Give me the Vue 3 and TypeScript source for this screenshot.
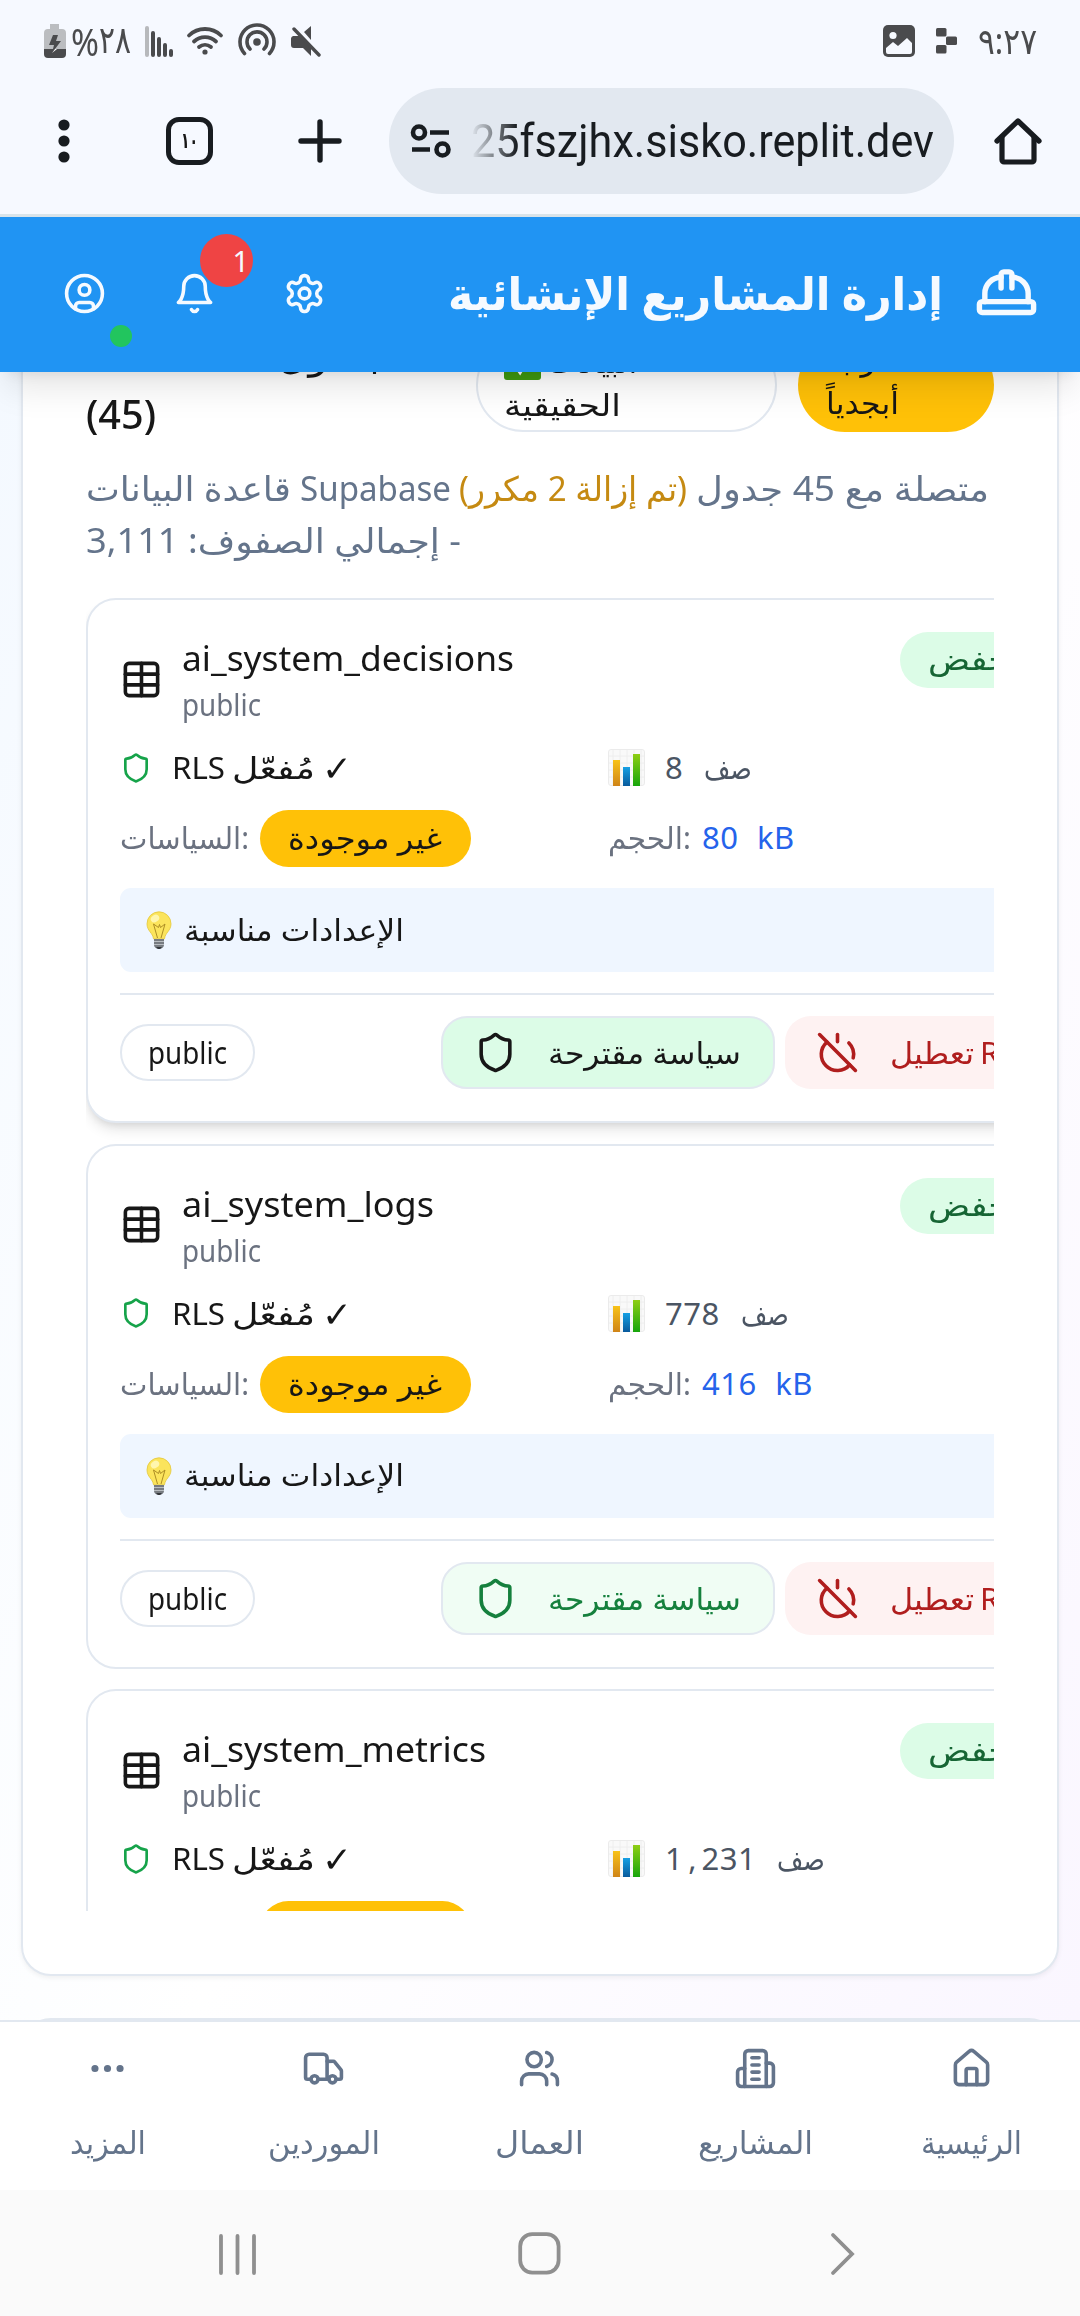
<script setup lang="ts">
import type { Directive } from 'vue'

interface TableInfo {
  name: string
  rows: string
  size: string
  active: boolean
}

const tables: TableInfo[] = [
  { name: 'ai_system_decisions', rows: '8', size: '80 kB', active: true },
  { name: 'ai_system_logs', rows: '778', size: '416 kB', active: false },
  { name: 'ai_system_metrics', rows: '1,231', size: '1144 kB', active: false },
]

const nameWidths: Record<string, number> = {
  ai_system_decisions: 332,
  ai_system_logs: 252,
  ai_system_metrics: 304,
}

const circle = (cx: number, cy: number, r: number): string =>
  `M${cx - r} ${cy}a${r} ${r} 0 1 0 ${2 * r} 0a${r} ${r} 0 1 0 ${-2 * r} 0`

const icons: Record<string, string[]> = {
  user: [circle(12, 12, 10), circle(12, 10, 3), 'M7 20.662V19a2 2 0 0 1 2-2h6a2 2 0 0 1 2 2v1.662'],
  bell: ['M6 8a6 6 0 0 1 12 0c0 7 3 9 3 9H3s3-2 3-9', 'M10.3 21a1.94 1.94 0 0 0 3.4 0'],
  gear: [
    'M12.22 2h-.44a2 2 0 0 0-2 2v.18a2 2 0 0 1-1 1.73l-.43.25a2 2 0 0 1-2 0l-.15-.08a2 2 0 0 0-2.73.73l-.22.38a2 2 0 0 0 .73 2.73l.15.1a2 2 0 0 1 1 1.72v.51a2 2 0 0 1-1 1.74l-.15.09a2 2 0 0 0-.73 2.73l.22.38a2 2 0 0 0 2.73.73l.15-.08a2 2 0 0 1 2 0l.43.25a2 2 0 0 1 1 1.73V20a2 2 0 0 0 2 2h.44a2 2 0 0 0 2-2v-.18a2 2 0 0 1 1-1.73l.43-.25a2 2 0 0 1 2 0l.15.08a2 2 0 0 0 2.73-.73l.22-.39a2 2 0 0 0-.73-2.73l-.15-.08a2 2 0 0 1-1-1.74v-.5a2 2 0 0 1 1-1.74l.15-.09a2 2 0 0 0 .73-2.73l-.22-.38a2 2 0 0 0-2.73-.73l-.15.08a2 2 0 0 1-2 0l-.43-.25a2 2 0 0 1-1-1.73V4a2 2 0 0 0-2-2z',
    circle(12, 12, 3),
  ],
  hat: [
    'M2 18a1 1 0 0 0 1 1h18a1 1 0 0 0 1-1v-2a1 1 0 0 0-1-1H3a1 1 0 0 0-1 1v2z',
    'M10 10V5a1 1 0 0 1 1-1h2a1 1 0 0 1 1 1v5',
    'M4 15v-3a6 6 0 0 1 6-6',
    'M14 6a6 6 0 0 1 6 6v3',
  ],
  table: ['M12 3v18', 'M5 3h14a2 2 0 0 1 2 2v14a2 2 0 0 1-2 2H5a2 2 0 0 1-2-2V5a2 2 0 0 1 2-2z', 'M3 9h18', 'M3 15h18'],
  shield: [
    'M20 13c0 5-3.5 7.5-7.66 8.95a1 1 0 0 1-.67-.01C7.5 20.5 4 18 4 13V6a1 1 0 0 1 1-1c2 0 4.5-1.2 6.24-2.72a1.17 1.17 0 0 1 1.52 0C14.51 3.81 17 5 19 5a1 1 0 0 1 1 1z',
  ],
  powerOff: ['M18.36 6.64A9 9 0 0 1 20.77 15', 'M6.16 6.16a9 9 0 1 0 12.68 12.68', 'M12 2v4', 'm2 2 20 20'],
  more: [circle(12, 12, 1), circle(19, 12, 1), circle(5, 12, 1)],
  truck: [
    'M14 18V6a2 2 0 0 0-2-2H4a2 2 0 0 0-2 2v11a1 1 0 0 0 1 1h2',
    'M15 18H9',
    'M19 18h2a1 1 0 0 0 1-1v-3.65a1 1 0 0 0-.22-.624l-3.48-4.35A1 1 0 0 0 17.52 8H14',
    circle(17, 18, 2),
    circle(7, 18, 2),
  ],
  users: [
    'M16 21v-2a4 4 0 0 0-4-4H6a4 4 0 0 0-4 4v2',
    circle(9, 7, 4),
    'M22 21v-2a4 4 0 0 0-3-3.87',
    'M16 3.13a4 4 0 0 1 0 7.75',
  ],
  building: [
    'M6 22V4a2 2 0 0 1 2-2h8a2 2 0 0 1 2 2v18Z',
    'M6 12H4a2 2 0 0 0-2 2v6a2 2 0 0 0 2 2h2',
    'M18 9h2a2 2 0 0 1 2 2v9a2 2 0 0 1-2 2h-2',
    'M10 6h4',
    'M10 10h4',
    'M10 14h4',
    'M10 18h4',
  ],
  house: [
    'M15 21v-8a1 1 0 0 0-1-1h-4a1 1 0 0 0-1 1v8',
    'M3 10a2 2 0 0 1 .709-1.528l7-5.999a2 2 0 0 1 2.582 0l7 5.999A2 2 0 0 1 21 10v9a2 2 0 0 1-2 2H5a2 2 0 0 1-2-2z',
  ],
}

const navItems = [
  { label: 'المزيد', icon: 'more', width: 76 },
  { label: 'الموردين', icon: 'truck', width: 112 },
  { label: 'العمال', icon: 'users', width: 89 },
  { label: 'المشاريع', icon: 'building', width: 115 },
  { label: 'الرئيسية', icon: 'house', width: 101 },
]

// Condenses or widens a label so that it takes exactly the given width.
const vFit: Directive<HTMLElement, number> = {
  mounted(el, { value }) {
    const natural = el.getBoundingClientRect().width
    el.style.transform = `scaleX(${value / natural})`
    el.style.marginRight = `${value - natural}px`
  },
}
</script>

<template>
  <div class="phone">
    <div class="status">
      <svg class="battery" width="22" height="34" viewBox="0 0 22 34">
        <path d="M6 0h9v5h3a4 4 0 0 1 4 4v16H0V9a4 4 0 0 1 4-4h2z" fill="#bbbdc0" />
        <path d="M0 25h22v5a4 4 0 0 1-4 4H4a4 4 0 0 1-4-4z" fill="#4a4b4d" />
        <path d="M9 11h5l-2 6h5L8 29l2-8H5z" fill="#4a4b4d" />
        <path d="M11 25h2l-5 4z" fill="#fff" />
      </svg>
      <span class="percent"><span v-fit="28" class="t">%</span><span v-fit="32" class="t digits">٢٨</span></span>
      <svg class="signal" width="29" height="31" viewBox="0 0 29 31" stroke-width="4" stroke-linecap="round">
        <path d="M2 2v27" stroke="#b7b9bc" />
        <path d="M8 7v22M14 13v16M20 19v10M26 25v4" stroke="#4a4b4d" />
      </svg>
      <svg class="wifi" width="38" height="28" viewBox="0 0 38 28" fill="none" stroke="#4a4b4d" stroke-width="3.8" stroke-linecap="round">
        <path d="M3 8.500a23 23 0 0 1 32 0M8 14.500a16 16 0 0 1 22 0M13 20a9.500 9.500 0 0 1 12 0" />
        <circle cx="19" cy="25" r="2.600" fill="#4a4b4d" stroke="none" />
      </svg>
      <svg class="hotspot" width="38" height="33" viewBox="0 0 38 33" fill="none" stroke="#4a4b4d" stroke-width="3.600" stroke-linecap="round">
        <path d="M6.500 30.500a17 17 0 1 1 25 0M12 26a10 10 0 1 1 14 0" />
        <circle cx="19" cy="19" r="3.800" fill="#4a4b4d" stroke="none" />
      </svg>
      <svg class="mute" width="31" height="31" viewBox="0 0 31 31">
        <path d="M2 10h6l12 12v8l-8-8H3a3 3 0 0 1-3-3v-6a3 3 0 0 1 2-3zM20 0v14l-7-8z" fill="#4a4b4d" />
        <path d="M3 3l25 26" stroke="#4a4b4d" stroke-width="3.400" stroke-linecap="round" />
      </svg>
      <svg class="photo" width="32" height="32" viewBox="0 0 32 32">
        <rect width="32" height="32" rx="5" fill="#4a4b4d" />
        <circle cx="10" cy="10.500" r="3.600" fill="#f6f9ff" />
        <path d="M3 23l7-6 5 4 9-8 5 5v9a2 2 0 0 1-2 2H5a2 2 0 0 1-2-2z" fill="#f6f9ff" />
      </svg>
      <svg class="replit" width="21" height="26" viewBox="0 0 21 26" fill="#4a4b4d">
        <rect width="10.500" height="8.500" rx="1.500" />
        <rect x="10" y="8.500" width="11" height="8.500" rx="1.500" />
        <rect y="17" width="10.500" height="8.500" rx="1.500" />
      </svg>
      <span v-fit="59" class="t clock">٩:٢٧</span>
    </div>

    <div class="toolbar">
      <svg class="dots" width="12" height="44" viewBox="0 0 12 44" fill="#181c20">
        <circle cx="6" cy="6" r="5.600" />
        <circle cx="6" cy="22" r="5.600" />
        <circle cx="6" cy="38" r="5.600" />
      </svg>
      <div class="tabs"><span v-fit="17" class="t">١٠</span></div>
      <svg class="plus" width="44" height="44" viewBox="0 0 44 44" stroke="#181c20" stroke-width="5.400" stroke-linecap="round">
        <path d="M22 3v38M3 22h38" />
      </svg>
      <div class="address">
        <svg width="42" height="34" viewBox="0 0 42 34" fill="none" stroke="#181c20" stroke-width="4.600">
          <circle cx="9" cy="8.500" r="6" />
          <circle cx="32.500" cy="25.500" r="6" />
          <path d="M20 8.500h19M2 25.500h18" />
        </svg>
        <div class="url"><span v-fit="463" class="t">25fszjhx.sisko.replit.dev</span></div>
      </div>
      <svg class="home" width="50" height="48" viewBox="0 0 50 48" fill="none" stroke="#181c20" stroke-width="5.200" stroke-linecap="round" stroke-linejoin="round">
        <path d="M4 24L25 4l21 20" />
        <path d="M9 20v23a2 2 0 0 0 2 2h28a2 2 0 0 0 2-2V20" />
      </svg>
    </div>

    <header class="appbar">
      <div class="action">
        <svg class="icon" viewBox="0 0 24 24"><path v-for="d in icons.user" :key="d" :d="d" /></svg>
        <i class="online"></i>
      </div>
      <div class="action">
        <svg class="icon" viewBox="0 0 24 24"><path v-for="d in icons.bell" :key="d" :d="d" /></svg>
        <span class="count">1</span>
      </div>
      <div class="action">
        <svg class="icon" viewBox="0 0 24 24"><path v-for="d in icons.gear" :key="d" :d="d" /></svg>
      </div>
      <h1><span v-fit="495" class="t">إدارة المشاريع الإنشائية</span></h1>
      <svg class="icon hat" viewBox="0 0 24 24"><path v-for="d in icons.hat" :key="d" :d="d" /></svg>
    </header>

    <main class="content">
      <section class="panel">
        <div class="heading">
          <div class="title">
            <div class="first"><span v-fit="110" class="t">جداول</span></div>
            <div><span v-fit="70" class="t">(45)</span></div>
          </div>
          <div class="chip outline">
            <div class="chip-line">
              <svg width="37" height="37" viewBox="0 0 37 37">
                <rect width="37" height="37" rx="3" fill="#3f9a10" />
                <path d="M9 18l7 10L28 8" stroke="#fff" stroke-width="5" fill="none" />
              </svg>
              <span v-fit="90" class="t">البيانات</span>
            </div>
            <div class="chip-line"><span v-fit="117" class="t">الحقيقية</span></div>
          </div>
          <div class="chip amber">
            <div class="chip-line"><span v-fit="68" class="t">مرتبة</span></div>
            <div class="chip-line"><span v-fit="73" class="t">أبجدياً</span></div>
          </div>
        </div>

        <div class="desc">
          <div class="desc-line">
            <span v-fit="205" class="t">قاعدة البيانات</span>
            <span v-fit="151" class="t">Supabase</span>
            <span v-fit="228" class="t gold" dir="rtl">(تم إزالة 2 مكرر)</span>
            <span v-fit="293" class="t" dir="rtl">متصلة مع 45 جدول</span>
          </div>
          <div class="desc-line"><span v-fit="375" class="t" dir="rtl">- إجمالي الصفوف: 3,111</span></div>
        </div>

        <div class="list">
          <article v-for="table in tables" :key="table.name" class="card" :class="{ active: table.active }">
            <div class="card-head">
              <svg class="icon" viewBox="0 0 24 24"><path v-for="d in icons.table" :key="d" :d="d" /></svg>
              <div class="names">
                <div class="name"><span v-fit="nameWidths[table.name]" class="t">{{ table.name }}</span></div>
                <div class="schema"><span v-fit="79" class="t">public</span></div>
              </div>
              <div class="risk"><span v-fit="112" class="t">منخفض</span></div>
            </div>

            <div class="row rls">
              <div class="cell">
                <svg class="icon small" viewBox="0 0 24 24"><path v-for="d in icons.shield" :key="d" :d="d" /></svg>
                <span v-fit="53" class="t latin">RLS</span>
                <span v-fit="83" class="t">مُفعّل</span>
                <span v-fit="30" class="t check">✓</span>
              </div>
              <div class="cell mono gray">
                <svg class="chart" width="37" height="37" viewBox="0 0 37 37">
                  <defs>
                    <linearGradient id="cy" x1="0" y1="0" x2="0" y2="1"><stop offset="0" stop-color="#f8c217" /><stop offset="1" stop-color="#cf8418" /></linearGradient>
                    <linearGradient id="cb" x1="0" y1="0" x2="0" y2="1"><stop offset="0" stop-color="#16a0e4" /><stop offset="1" stop-color="#095a9c" /></linearGradient>
                    <linearGradient id="cg" x1="0" y1="0" x2="0" y2="1"><stop offset="0" stop-color="#8fce14" /><stop offset="1" stop-color="#17a50c" /></linearGradient>
                  </defs>
                  <rect x=".5" y=".5" width="36" height="36" rx="2.500" fill="#f9f9f9" stroke="#ebebeb" />
                  <path d="M5 1v35M12 1v35M19 1v35M26 1v35M33 1v35M1 7h35M1 14h35M1 21h35M1 28h35" stroke="#ececec" stroke-width=".8" />
                  <rect x="5" y="11" width="7" height="26" fill="url(#cy)" />
                  <rect x="15" y="18" width="7" height="19" fill="url(#cb)" />
                  <rect x="25" y="5" width="7" height="32" fill="url(#cg)" />
                </svg>
                <span class="t"><template v-for="(part, i) in table.rows.split(',')" :key="i"><span v-if="i > 0" class="comma">,</span>{{ part }}</template></span>
                <span v-fit="48" class="t unit">صف</span>
              </div>
            </div>

            <div class="row policy">
              <div class="cell">
                <span v-fit="129" class="t muted">السياسات&lrm;:</span>
                <span class="tag amber"><span v-fit="154" class="t">غير موجودة</span></span>
              </div>
              <div class="cell">
                <span v-fit="83" class="t muted">الحجم&lrm;:</span>
                <span class="t mono blue">{{ table.size }}</span>
              </div>
            </div>

            <div class="note">
              <svg width="26" height="38" viewBox="0 0 26 38">
                <path d="M13 .8a12 12 0 0 1 12 12c0 7-6 9-6.500 15h-11C7 22 1 20 1 12.800a12 12 0 0 1 12-12z" fill="#fbe45c" stroke="#e3c738" stroke-width=".8" />
                <ellipse cx="9" cy="7.500" rx="4.500" ry="3.500" fill="#fff6ae" transform="rotate(-35 9 7.500)" />
                <path d="M11.500 27l-4-14 5 3.500 1-3 1 3 4.500-3.500-4 14" fill="none" stroke="#ad8e25" stroke-width="1" />
                <path d="M8 28h10v6a5 4 0 0 1-10 0z" fill="#777b80" />
                <path d="M8 30.500h10M8 33.500h10" stroke="#b9bdc1" stroke-width="1" />
                <path d="M10 36h6l-2 2h-2z" fill="#33363a" />
              </svg>
              <span v-fit="220" class="t">الإعدادات مناسبة</span>
            </div>

            <div class="actions">
              <span class="tag bordered"><span v-fit="79" class="t">public</span></span>
              <div class="btn suggest">
                <svg class="icon" viewBox="0 0 24 24"><path v-for="d in icons.shield" :key="d" :d="d" /></svg>
                <span v-fit="193" class="t">سياسة مقترحة</span>
              </div>
              <div class="btn disable">
                <svg class="icon" viewBox="0 0 24 24"><path v-for="d in icons.powerOff" :key="d" :d="d" /></svg>
                <span v-fit="84" class="t">تعطيل</span>
                <span v-fit="53" class="t rls-word">RLS</span>
              </div>
            </div>
          </article>
        </div>
      </section>
      <section class="next-panel"></section>
    </main>

    <nav class="tabbar">
      <div v-for="item in navItems" :key="item.label" class="tab">
        <svg class="icon" viewBox="0 0 24 24"><path v-for="d in icons[item.icon]" :key="d" :d="d" /></svg>
        <div class="tab-label"><span v-fit="item.width" class="t">{{ item.label }}</span></div>
      </div>
    </nav>

    <div class="system">
      <svg class="recents" width="38" height="42" viewBox="0 0 38 42"><path d="M3 3v37M19.500 3v37M36 3v37" /></svg>
      <svg class="homekey" width="43" height="43" viewBox="0 0 43 43"><rect x="2.200" y="2.200" width="38.400" height="38.400" rx="12" /></svg>
      <svg class="back" width="26" height="44" viewBox="0 0 26 44"><path d="M3 3l19 19L3 41" /></svg>
    </div>
  </div>
</template>

<style>
body {
  margin: 0;
}
</style>

<style scoped>
* {
  box-sizing: border-box;
}
.phone {
  width: 1080px;
  height: 2316px;
  display: flex;
  flex-direction: column;
  overflow: hidden;
  background: #f6f9ff;
  color: #171717;
  font-family: 'Noto Sans', 'DejaVu Sans', sans-serif;
  font-size: 30px;
  line-height: 43px;
}
svg {
  display: block;
  flex: none;
}
.t {
  display: inline-block;
  flex: none;
  white-space: nowrap;
  transform-origin: left center;
}
.icon {
  width: 43px;
  height: 43px;
  fill: none;
  stroke: currentColor;
  stroke-width: 2;
  stroke-linecap: round;
  stroke-linejoin: round;
}

/* system status */
.status {
  height: 82px;
  flex: none;
  display: flex;
  align-items: center;
  padding: 0 43px 0 44px;
  color: #4a4b4d;
}
.percent {
  display: flex;
  margin: 1px 14px 0 5px;
  font-size: 38px;
}
.digits {
  margin-top: -3px;
}
.wifi {
  margin: 0 14px 0 12px;
}
.hotspot {
  margin: -4px 15px 0 0;
}
.photo {
  margin-left: auto;
}
.replit {
  margin: 0 21px 0 21px;
}
.clock {
  margin-top: -2px;
  font-size: 36px;
}

/* browser toolbar */
.toolbar {
  height: 135px;
  flex: none;
  display: flex;
  align-items: center;
  padding: 0 37px 14px 58px;
  border-bottom: 3px solid #d9e4ea;
}
.tabs {
  width: 47px;
  height: 48px;
  margin: 0 85px 0 96px;
  border: 5px solid #181c20;
  border-radius: 13px;
  display: flex;
  justify-content: center;
  font-size: 22px;
  font-weight: bold;
  line-height: 35px;
}
.address {
  width: 565px;
  height: 106px;
  margin: 0 39px 0 47px;
  padding: 0 20px 0 21px;
  border-radius: 53px;
  background: #e2e8f0;
  display: flex;
  align-items: center;
  color: #181c20;
}
.url {
  width: 464px;
  margin-left: 19px;
  font: 46px/62px Roboto, sans-serif;
  -webkit-mask-image: linear-gradient(to right, transparent, #000 46px);
  mask-image: linear-gradient(to right, transparent, #000 46px);
}

/* app header */
.appbar {
  position: relative;
  z-index: 2;
  height: 155px;
  flex: none;
  display: flex;
  align-items: center;
  padding: 0 41px 3px 63px;
  background: #2094f3;
  color: #f5faff;
  box-shadow: 0 22px 32px -6px rgba(0, 0, 0, 0.1), 0 9px 13px -9px rgba(0, 0, 0, 0.1);
}
.action {
  position: relative;
  margin-right: 67px;
}
.online {
  position: absolute;
  left: 47px;
  top: 53px;
  width: 22px;
  height: 22px;
  border-radius: 50%;
  background: #22c55e;
}
.count {
  position: absolute;
  left: 27px;
  top: -38px;
  width: 53px;
  height: 53px;
  padding-right: 4px;
  border-radius: 50%;
  background: #ef4444;
  font-size: 29px;
  line-height: 53px;
  text-align: right;
}
h1 {
  margin: 0 31px 0 auto;
  font-size: 45px;
  line-height: 64px;
  font-weight: bold;
}
.hat {
  width: 65px;
  height: 65px;
}

/* scrolled page */
.content {
  height: 1648px;
  flex: none;
  overflow: hidden;
  background: linear-gradient(115deg, #f4f9ff 0%, #fff 52%, #faf6ff 100%);
}
.panel {
  height: 1664px;
  margin: -60px 21px 0;
  padding: 24px 63px 0;
  border: 2px solid #e2e8f0;
  border-radius: 30px;
  background: #fff;
  box-shadow: 0 2px 5px rgba(0, 0, 0, 0.06);
}
.next-panel {
  height: 100px;
  margin: 42px 21px 0;
  border: 2px solid #e2e8f0;
  border-radius: 30px;
  background: #e2e8f0;
}
.heading {
  height: 94px;
  display: flex;
}
.title {
  width: 390px;
  margin-top: -16px;
  font-size: 40px;
  font-weight: 500;
  line-height: 61px;
}
.first {
  padding-left: 192px;
}
.chip {
  padding: 0 0 0 28px;
  border-radius: 47px;
}
.chip-line {
  display: flex;
  align-items: center;
  gap: 6px;
}
.outline {
  width: 301px;
  margin-right: 21px;
  border: 2px solid #e2e8f0;
  padding: 0 0 0 26px;
}
.outline .chip-line {
  height: 43px;
}
.chip.amber {
  width: 196px;
}
.amber {
  background: #ffc107;
}
.desc {
  margin-top: 30px;
  color: #64748b;
  font-size: 34px;
  line-height: 52px;
}
.desc-line {
  display: flex;
  gap: 8.500px;
}
.gold {
  color: #c58a12;
}

/* tables */
.list {
  height: 1313px;
  margin-top: 32px;
  overflow: hidden;
}
.card {
  width: 1016px;
  height: 525px;
  margin-bottom: 20.500px;
  padding: 32px;
  border: 2px solid #e2e8f0;
  border-radius: 30px;
  background: #fff;
}
.card.active {
  box-shadow: 0 9px 13px -2px rgba(0, 0, 0, 0.1), 0 4px 9px -4px rgba(0, 0, 0, 0.12);
}
.card-head {
  height: 94px;
  display: flex;
  align-items: center;
}
.names {
  flex: none;
  width: 718px;
  margin-left: 19px;
}
.name {
  height: 51px;
  padding-top: 1px;
  font-size: 35px;
  line-height: 50px;
}
.schema,
.muted {
  color: #6b7280;
}
.schema {
  height: 43px;
}
.risk {
  align-self: flex-start;
  height: 56px;
  padding: 5px 28px;
  border-radius: 28px;
  background: #dcfce7;
  color: #166534;
}
.row {
  display: grid;
  grid-template-columns: 488px 1fr;
}
.rls {
  height: 43px;
  margin-top: 20px;
}
.cell {
  display: flex;
  align-items: center;
}
.small {
  width: 32px;
  height: 32px;
  color: #16a34a;
}
.latin {
  margin-left: 20px;
}
.latin + .t {
  margin-left: 7px;
}
.check {
  margin-left: 7px;
  font-size: 36px;
  font-weight: bold;
}
.mono {
  letter-spacing: 0.500px;
  word-spacing: 10px;
  font-size: 31px;
}
.comma {
  display: inline-block;
  width: 18.200px;
  padding-left: 5px;
}
.chart {
  margin-right: 20px;
}
.gray {
  color: #4b5563;
}
.unit {
  margin-left: 21px;
  letter-spacing: 0;
}
.blue {
  margin-left: 11px;
  color: #2563eb;
}
.policy {
  height: 57px;
  margin: 21px 0;
}
.policy .cell > .t {
  margin-top: -2px;
}
.tag {
  height: 57px;
  padding: 6px 28px;
  border-radius: 29px;
  display: flex;
}
.cell .tag {
  width: 211px;
  margin-left: 11px;
}
.note {
  height: 84px;
  padding-left: 26px;
  border-radius: 11px;
  background: #eff6ff;
  display: flex;
  align-items: center;
  gap: 12px;
}
.note .t {
  margin-top: -2px;
}
.actions {
  margin-top: 21px;
  padding-top: 21px;
  border-top: 2px solid #e2e8f0;
  display: flex;
  align-items: center;
}
.bordered {
  flex: none;
  width: 135px;
  padding: 5px 26px;
  border: 2px solid #e2e8f0;
}
.btn {
  flex: none;
  height: 73px;
  border-radius: 26px;
  display: flex;
  align-items: center;
}
.suggest {
  width: 334px;
  margin: 0 10px 0 186px;
  padding-left: 31px;
  gap: 31px;
  border: 2px solid #e2e8f0;
  background: #f0fdf4;
  color: #15803d;
}
.active .suggest {
  background: #dcfce7;
  color: #171717;
}
.disable {
  width: 261px;
  padding-left: 31px;
  background: #fef2f2;
  color: #b01e1e;
}
.disable .icon {
  margin-right: 31px;
}
.rls-word {
  margin-left: 6px;
}

/* bottom navigation */
.tabbar {
  height: 170px;
  flex: none;
  display: flex;
  border-top: 2px solid #e2e8f0;
  background: #fff;
  color: #64748b;
}
.tab {
  width: 216px;
  display: flex;
  flex-direction: column;
  align-items: center;
  padding: 25px 1px 0 0;
}
.tab-label {
  margin-top: 31px;
  display: flex;
  font-size: 31px;
}
.system {
  height: 126px;
  flex: none;
  display: flex;
  align-items: center;
  padding: 1px 0 0 218px;
  background: #fafafa;
}
.system svg {
  fill: none;
  stroke: #8f8f8f;
  stroke-width: 3.800;
  stroke-linecap: round;
}
.homekey {
  margin: 0 269px 0 262px;
}
</style>
